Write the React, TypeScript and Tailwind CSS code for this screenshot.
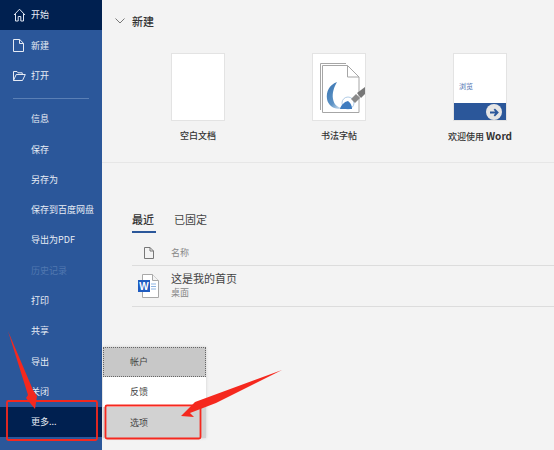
const FONT = "font-['Noto_Sans_CJK_SC','Noto_Sans',sans-serif]";

function NavIcon({ type }: { type: string }) {
  if (type === "home")
    return (
      <svg width="13" height="14" viewBox="0 0 13 14" fill="none" stroke="#dfe6f2" strokeWidth="1">
        <path d="M1 7 6.500 1.200 12 7M2.500 5.800V13h2.700V8.500h2.600V13h2.700V5.800" />
      </svg>
    );
  if (type === "new")
    return (
      <svg width="11" height="13" viewBox="0 0 11 13" fill="none" stroke="#e6ebf5" strokeWidth="1">
        <path d="M.5.500h6.200l3.800 3.800v8.200H.5zM6.500.5v4h4" />
      </svg>
    );
  return (
    <svg width="13" height="10" viewBox="0 0 13 10" fill="none" stroke="#e6ebf5" strokeWidth="1">
      <path d="M.5 9.500V.5h3.500l1 1.300h4.200v1.400M.5 9.500h9l2.800-6H3.200z" />
    </svg>
  );
}

function NavItem({ label, icon, active, muted }: { label: string; icon?: string; active?: boolean; muted?: boolean }) {
  return (
    <div
      className={`flex h-[30.3px] shrink-0 items-center pl-[31px] text-[9px] ${active ? "bg-[#002050] text-[#e8edf5]" : muted ? "text-[#5177b0]" : "text-[#e8edf5]"}`}
    >
      {icon && (
        <span className="-ml-[18px] flex w-[18px] items-center">
          <NavIcon type={icon} />
        </span>
      )}
      {label}
    </div>
  );
}

function Sidebar() {
  const items = ["信息", "保存", "另存为", "保存到百度网盘", "导出为PDF", "历史记录", "打印", "共享", "导出", "关闭"];
  return (
    <aside className="flex h-[450px] w-[102px] shrink-0 flex-col bg-[#2b579a]">
      <NavItem label="开始" icon="home" active />
      <NavItem label="新建" icon="new" />
      <NavItem label="打开" icon="open" />
      <div className="mx-[13px] mb-[5px] mt-[7px] h-px shrink-0 bg-[#5a7fb5]" />
      {items.map((t) => (
        <NavItem key={t} label={t} muted={t === "历史记录"} />
      ))}
      <NavItem label="更多..." active />
    </aside>
  );
}

function Template({ label, children, className }: { label: React.ReactNode; children?: React.ReactNode; className: string }) {
  return (
    <div className={`flex w-[100px] flex-col items-center ${className}`}>
      <div className="relative h-[68px] w-[54px] overflow-hidden border border-[#e3e3e3] bg-white">{children}</div>
      <div className="mt-[8px] whitespace-nowrap text-[9px] font-medium leading-[14px] text-[#333]">{label}</div>
    </div>
  );
}

function BrushArt() {
  return (
    <svg width="52" height="66" viewBox="0 0 52 66">
      <defs>
        <linearGradient id="crescent" x1="0.2" y1="0" x2="0.9" y2="1">
          <stop offset="0" stopColor="#3d78b4" />
          <stop offset="0.6" stopColor="#5d93c6" />
          <stop offset="1" stopColor="#e6eff7" />
        </linearGradient>
      </defs>
      <path d="M7.500 56V9.500H33" stroke="#a6a6a6" fill="none" />
      <path d="M9.500 11.500h25l11.500 11.500V58.500h-36.500z" fill="#fff" stroke="#a6a6a6" />
      <path d="M34.500 11.500v11.500H46" fill="none" stroke="#a6a6a6" />
      <path d="M24 28C16 31 13 38 14 45c1 6 6 10 13 10 2 0 3-.3 4-1-6 0-10-3-11-9-1-6 1-12 4-17z" fill="url(#crescent)" />
      <circle cx="35" cy="49" r="6" fill="none" stroke="#9dbfe0" strokeWidth="0.800" />
      <path d="M27 55c1-4 4-7 8-8 3 2 4 5 4 8z" fill="#3f7cc0" />
      <path d="M38 45l5-5 4 4-5 5z" fill="#8a8a8a" />
      <path d="M44 39l8-6v7l-4 4z" fill="#777" />
    </svg>
  );
}

function WelcomeArt() {
  return (
    <>
      <div className="absolute left-[5px] top-[26px] text-[7px] leading-[12px] text-[#4a6fb0]">浏览</div>
      <div className="absolute bottom-0 left-0 right-0 h-[17px] bg-[#2b579a]" />
      <div className="absolute bottom-[0px] right-[4px] flex h-[16px] w-[16px] items-center justify-center rounded-full bg-[#e6e6e6]">
        <svg width="9" height="9" viewBox="0 0 9 9" fill="none" stroke="#2b579a" strokeWidth="1.800">
          <path d="M0 4.500h7M4.300 1.200l3.300 3.300-3.300 3.300" />
        </svg>
      </div>
    </>
  );
}

function WordIcon() {
  return (
    <svg width="22" height="24" viewBox="0 0 22 24">
      <path d="M4.500.5h10l6 6v17h-16z" fill="#fff" stroke="#a8a8a8" />
      <path d="M14.500.5v6h6" fill="#f3f3f3" stroke="#a8a8a8" />
      <rect x="0" y="6" width="12" height="12" fill="#1f5cc0" />
      <path d="M13 10h5M13 12.500h5M13 15h5" stroke="#8db4e2" />
      <text x="6" y="15.500" fontSize="10" fontWeight="700" fill="#fff" textAnchor="middle" fontFamily="Liberation Sans, sans-serif">W</text>
    </svg>
  );
}

function Main() {
  return (
    <main className="flex-1 overflow-hidden bg-[#f3f3f3]">
      <div className="flex h-[163px] flex-col border-b border-[#e6e6e6] pt-[13px]">
        <div className="flex items-center pl-[13px] text-[11px] font-medium leading-[16px] text-[#333]">
          <svg width="10" height="6" viewBox="0 0 10 6" fill="none" stroke="#777" className="mr-[7px]">
            <path d="M.5.500 5 5 9.500.500" />
          </svg>
          新建
        </div>
        <div className="mt-[24px] flex">
          <Template label="空白文档" className="ml-[46px]" />
          <Template label="书法字帖" className="ml-[41px]"><BrushArt /></Template>
          <Template
            label={<>欢迎使用 <span className="text-[10px] font-semibold">Word</span></>}
            className="ml-[41px]"
          >
            <WelcomeArt />
          </Template>
        </div>
      </div>
      <div className="ml-[30px] mt-[48px]">
        <div className="flex text-[11px] leading-[16px]">
          <div className="flex h-[22px] w-[24px] flex-col justify-between font-medium text-[#333]">
            <div className="whitespace-nowrap">最近</div>
            <div className="h-[2px] bg-[#2b579a]" />
          </div>
          <div className="ml-[18px] text-[#444]">已固定</div>
        </div>
        <div className="mt-[9px] flex h-[24px] items-center border-b border-[#dcdcdc] pb-[2px] text-[9px] text-[#888]">
          <span className="ml-[12px] mr-[17px] flex">
            <svg width="10" height="12" viewBox="0 0 10 12" fill="none" stroke="#777">
              <path d="M.5.500h5.500l3.500 3.500v7.500h-9zM6 .5v3.500h3.500" />
            </svg>
          </span>
          名称
        </div>
        <div className="flex h-[41px] items-start border-b border-[#dcdcdc] pt-[5px]">
          <span className="ml-[6px] mr-[11px] mt-[3px] flex"><WordIcon /></span>
          <div className="flex flex-col">
            <span className="text-[11px] leading-[15px] text-[#444]">这是我的首页</span>
            <span className="text-[9px] leading-[14px] text-[#888]">桌面</span>
          </div>
        </div>
      </div>
    </main>
  );
}

function MoreMenu() {
  return (
    <div className="absolute left-[103px] top-[347px] w-[103px] bg-white text-[9px] text-[#444] shadow-[0_0_3px_rgba(0,0,0,0.15)]">
      <div className="flex h-[30px] items-center border border-dotted border-[#666] bg-[#c8c8c8] pl-[26px]">帐户</div>
      <div className="flex h-[30px] items-center pl-[27px]">反馈</div>
      <div className="flex h-[31px] items-center bg-[#d2d2d2] pl-[27px]">选项</div>
    </div>
  );
}

function Annotations() {
  return (
    <svg className="pointer-events-none absolute left-0 top-0" width="554" height="450" viewBox="0 0 554 450">
      <rect x="7" y="401" width="90" height="39" rx="1.500" fill="none" stroke="#f5281e" strokeWidth="1.800" />
      <rect x="105.500" y="405.500" width="95" height="33" rx="1.500" fill="none" stroke="#f5281e" strokeWidth="1.800" />
      <path d="M8 331 L33 390 L37 396 L35 409 L26 398 L28 395 Z" fill="#f5281e" />
      <path d="M282 370 L195 402 L181 416 L194 417 L190 413 L216 403 Z" fill="#f5281e" />
    </svg>
  );
}

export default function App() {
  return (
    <div className={`relative flex h-[450px] w-[554px] overflow-hidden ${FONT}`}>
      <Sidebar />
      <Main />
      <MoreMenu />
      <Annotations />
    </div>
  );
}
